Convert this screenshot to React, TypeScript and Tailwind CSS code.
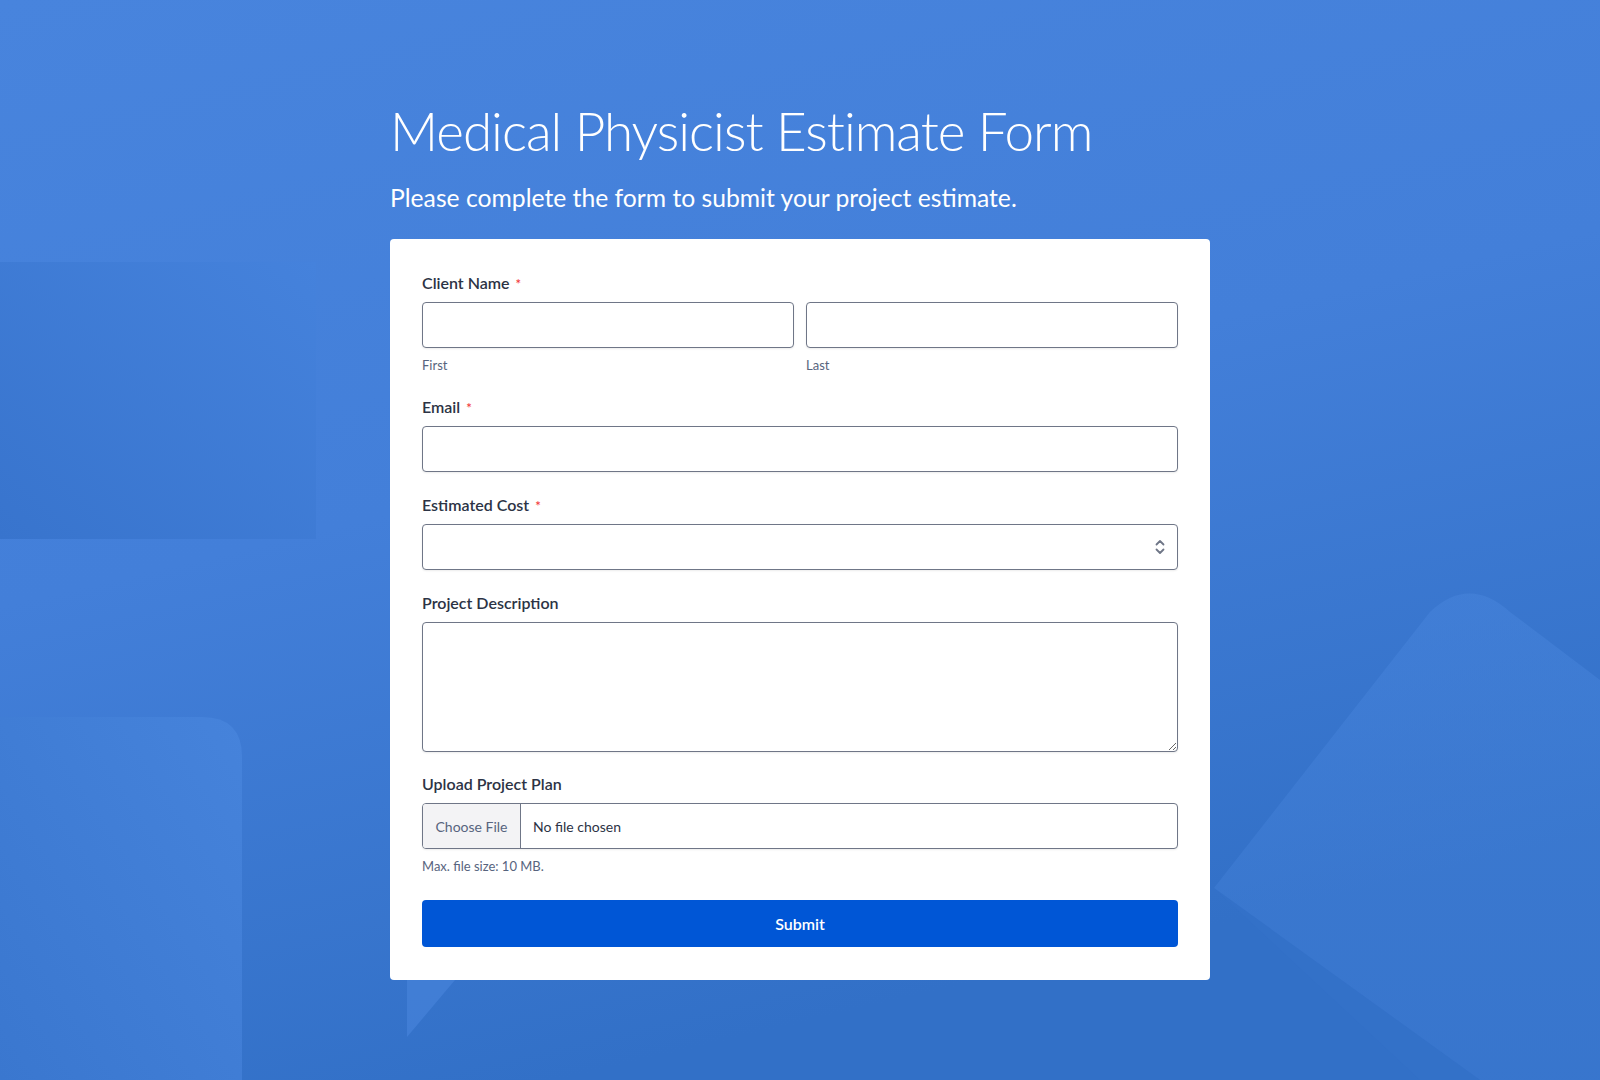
import React from "react";

const font = { fontFamily: "Lato, 'Open Sans', sans-serif" };

function Label({ text, required }: { text: string; required?: boolean }) {
  return (
    <label className="flex items-center h-5 mb-[9px] text-[16px] font-semibold text-[#2c3345]">
      {text}
      {required && <span className="ml-[6px] mt-[3px] text-[13px] leading-none text-[#f23a3c]">*</span>}
    </label>
  );
}

const inputCls =
  "block w-full h-[46px] rounded-[4px] border border-[#6f7687] bg-white shadow-[0_1px_2px_rgba(0,0,0,0.08)] outline-none px-3 text-[15px]";

function Background() {
  return (
    <svg className="absolute inset-0 w-full h-full" viewBox="0 0 1600 1080" preserveAspectRatio="none">
      <defs>
        <linearGradient id="bg" x1="0" y1="0" x2="0.35" y2="1">
          <stop offset="0" stopColor="#4884dd" />
          <stop offset="0.5" stopColor="#437fd9" />
          <stop offset="1" stopColor="#3270c7" />
        </linearGradient>
        <linearGradient id="rect" x1="1" y1="0" x2="0" y2="1">
          <stop offset="0" stopColor="#4582dc" />
          <stop offset="1" stopColor="#3874cd" />
        </linearGradient>
        <linearGradient id="round" x1="1" y1="0" x2="0" y2="1">
          <stop offset="0" stopColor="#4683db" />
          <stop offset="1" stopColor="#3a77cf" />
        </linearGradient>
        <linearGradient id="mount" x1="0" y1="0" x2="0" y2="1">
          <stop offset="0" stopColor="#4a87de" />
          <stop offset="1" stopColor="#3f7cd4" />
        </linearGradient>
      </defs>
      <rect width="1600" height="1080" fill="url(#bg)" />
      <rect x="0" y="262" width="316" height="277" fill="url(#rect)" />
      <path d="M0 717 H202 Q242 717 242 757 V1080 H0 Z" fill="url(#round)" />
      <path d="M1214 888 L1430 612 Q1469 575 1510 612 L1600 680 V1080 H1480 Z" fill="url(#mount)" opacity="0.45" />
      <path d="M1214 888 L1480 1080 H1420 Z" fill="#3672cb" opacity="0.35" />
      <path d="M407 980 L455 980 L407 1037 Z" fill="#4a86de" opacity="0.55" />
    </svg>
  );
}

export default function App() {
  return (
    <div className="relative min-h-screen h-[1080px] overflow-hidden" style={font}>
      <Background />
      <div className="relative w-[820px] mx-auto pt-[96px]">
        <h1 className="text-[53px] leading-[70px] font-light tracking-[-1px] text-white">Medical Physicist Estimate Form</h1>
        <p className="mt-[17px] text-[24.7px] leading-[30px] font-normal text-white">
          Please complete the form to submit your project estimate.
        </p>

        <form className="mt-[26px] bg-white rounded-[4px] px-8 pt-[34px] pb-[33px]" onSubmit={(e) => e.preventDefault()}>
          <Label text="Client Name" required />
          <div className="flex gap-3">
            <div className="flex-1">
              <input className={inputCls} />
              <div className="mt-[9px] text-[13px] leading-4 text-[#57647e]">First</div>
            </div>
            <div className="flex-1">
              <input className={inputCls} />
              <div className="mt-[9px] text-[13px] leading-4 text-[#57647e]">Last</div>
            </div>
          </div>

          <div className="mt-6">
            <Label text="Email" required />
            <input className={inputCls} />
          </div>

          <div className="mt-[23px]">
            <Label text="Estimated Cost" required />
            <div className="relative">
              <input className={inputCls} />
              <svg className="absolute right-[13px] top-[15px] w-[10px] h-[16px]" viewBox="0 0 10 16" fill="none">
                <path d="M1.5 5.5 L5 2 L8.5 5.5" stroke="#6f7687" strokeWidth="1.8" strokeLinecap="round" strokeLinejoin="round" />
                <path d="M1.5 10.5 L5 14 L8.5 10.5" stroke="#6f7687" strokeWidth="1.8" strokeLinecap="round" strokeLinejoin="round" />
              </svg>
            </div>
          </div>

          <div className="mt-[23px]">
            <Label text="Project Description" />
            <textarea className="block w-full h-[130px] rounded-[4px] border border-[#6f7687] bg-white shadow-[0_1px_2px_rgba(0,0,0,0.08)] outline-none p-3 text-[15px]" />
          </div>

          <div className="mt-[22px]">
            <Label text="Upload Project Plan" />
            <div className="flex h-[46px] rounded-[4px] border border-[#6f7687] bg-white overflow-hidden shadow-[0_1px_2px_rgba(0,0,0,0.08)]">
              <div className="w-[98px] flex items-center justify-center bg-[#f3f3f5] border-r border-[#6f7687] text-[14px] text-[#57647e]">
                Choose File
              </div>
              <div className="flex items-center pl-3 text-[14px] text-[#2c3345]">No file chosen</div>
            </div>
            <div className="mt-[9px] text-[13px] leading-4 text-[#57647e]">Max. file size: 10 MB.</div>
          </div>

          <button
            type="submit"
            className="mt-[26px] w-full h-[47px] rounded-[4px] bg-[#0056d6] text-white text-[16px] font-semibold"
          >
            Submit
          </button>
        </form>
      </div>
    </div>
  );
}
